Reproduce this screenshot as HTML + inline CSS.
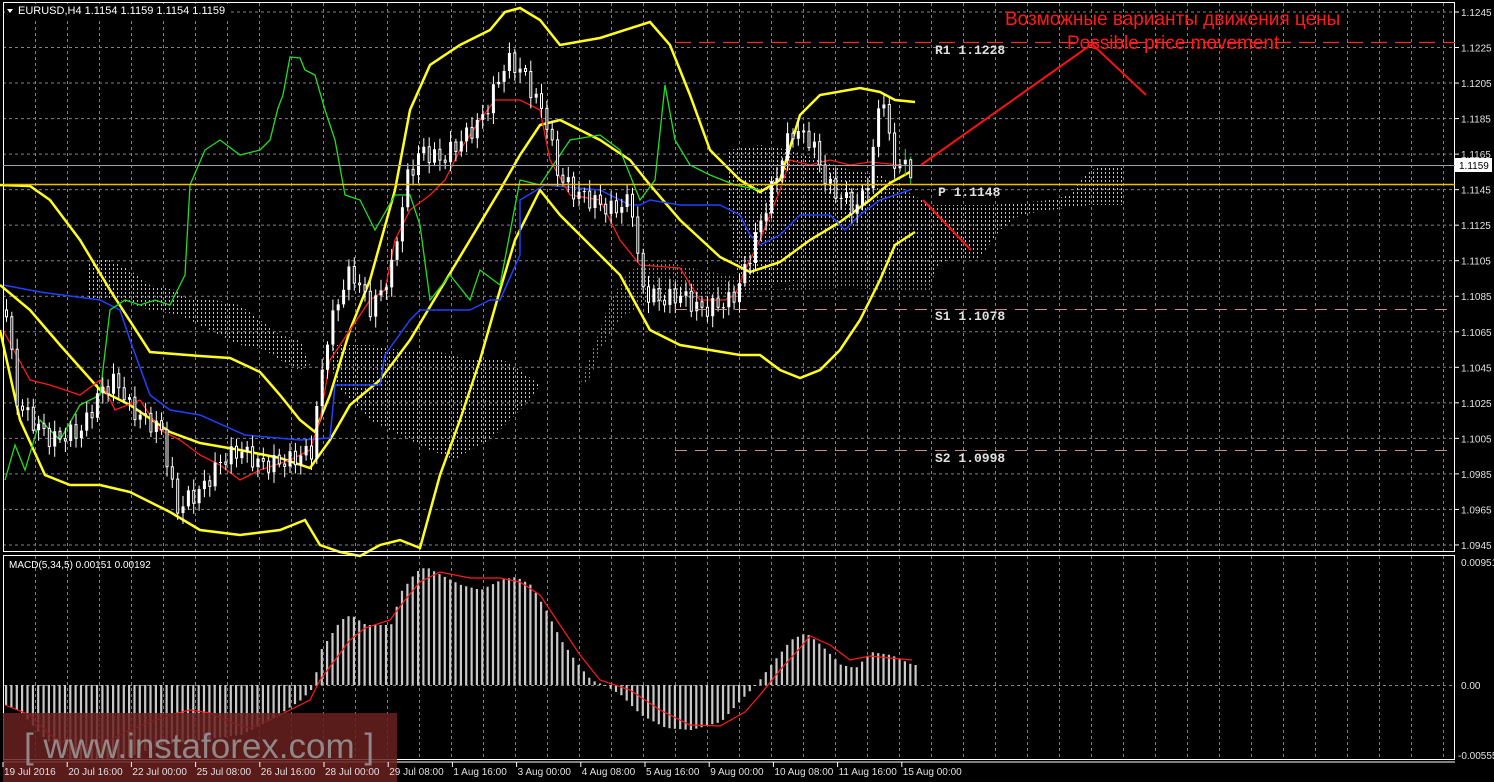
<!DOCTYPE html>
<html><head><meta charset="utf-8"><style>
html,body{margin:0;padding:0;background:#000;width:1494px;height:782px;overflow:hidden}
svg{display:block}
</style></head><body>
<svg id="s" width="1494" height="782" xmlns="http://www.w3.org/2000/svg" font-family="Liberation Sans, sans-serif">
<defs>
<pattern id="hw" width="4" height="4" patternUnits="userSpaceOnUse"><rect x="1" y="0" width="1" height="2" fill="#d8d8d8"/></pattern>
<pattern id="ho" width="4" height="4" patternUnits="userSpaceOnUse"><rect x="1" y="0" width="1" height="2" fill="#c8855a"/></pattern>
</defs>
<rect width="1494" height="782" fill="#000"/>
<g id="grid"></g>
<g opacity="0.9">
<polygon fill="url(#hw)" points="88,262 105,258 130,270 150,285 175,290 190,300 215,300 240,305 260,320 280,335 300,340 310,365 300,370 280,360 265,350 240,345 210,330 180,315 150,310 120,300 100,300 88,300"/>
<polygon fill="url(#hw)" points="330,345 370,345 400,350 440,352 470,360 500,358 520,370 540,385 530,400 510,420 490,440 470,450 455,460 430,450 410,440 390,430 370,420 350,400 335,385"/>
<polygon fill="url(#ho)" points="580,385 600,330 610,300 630,270 660,260 700,270 730,275 750,285 780,290 800,280 830,270 860,262 880,255 900,258 915,262 928,270 930,290 910,290 880,290 850,288 800,290 760,292 720,295 680,300 640,305 620,320 600,350 590,380"/>
<polygon fill="url(#hw)" points="728,150 760,145 790,150 820,160 850,170 880,175 905,190 930,205 960,205 990,205 1020,203 1050,200 1070,195 1085,175 1100,165 1122,165 1122,205 1090,205 1050,210 1020,215 1000,230 980,258 960,258 940,262 930,285 900,278 880,270 850,272 820,275 800,280 770,285 750,285 735,270 730,230 728,180"/>
</g>
<g id="lines"></g>
<g id="candles"></g>
<g id="macd"></g>
<rect x="3.5" y="2.5" width="1451" height="549" fill="none" stroke="#fff"/>
<rect x="3.5" y="555.5" width="1451" height="204" fill="none" stroke="#fff"/>
<line x1="3" y1="762" x2="1455" y2="762" stroke="#fff"/>
<line x1="675" y1="42.5" x2="1455" y2="42.5" stroke="#e8302a" stroke-width="1.3" stroke-dasharray="16,8"/>
<line x1="675" y1="309.5" x2="1455" y2="309.5" stroke="#c89080" stroke-dasharray="12,8"/>
<line x1="675" y1="450.5" x2="1455" y2="450.5" stroke="#c89080" stroke-dasharray="12,8"/>
<line x1="3" y1="165.5" x2="1455" y2="165.5" stroke="#9aa3ad"/>
<line x1="3" y1="184.5" x2="1455" y2="184.5" stroke="#f0c000" stroke-width="1.5"/>
<g font-family="Liberation Mono, monospace" font-weight="bold" font-size="13" fill="#e0e0e0">
<text x="935" y="54">R1 1.1228</text>
<text x="938" y="196">P 1.1148</text>
<text x="935" y="320">S1 1.1078</text>
<text x="935" y="462">S2 1.0998</text>
</g>
<text x="1005" y="25" font-size="19" fill="#ff1a1a">Возможные варианты движения цены</text>
<text x="1067" y="49" font-size="19" fill="#ff1a1a">Possible price movement</text>
<g stroke="#ff1010" stroke-width="2" fill="none">
<polyline points="921,165 1092,44 1146,95"/>
<line x1="923" y1="200" x2="971" y2="250"/>
</g>
<g id="title">
<rect x="5" y="4" width="225" height="14" fill="#000"/>
<g font-size="11" fill="#fff">
<polygon points="7,9 13,9 10,13" fill="#fff"/>
<text x="18" y="14">EURUSD,H4  1.1154 1.1159 1.1154 1.1159</text>
<text x="9" y="568" font-size="10">MACD(5,34,5) 0.00151 0.00192</text>
</g>
</g>
<g id="axis" font-size="10" fill="#e0e0e0"></g>
<rect x="1455" y="158" width="37" height="14" fill="#fff"/>
<text x="1459" y="169" font-size="10" fill="#000">1.1159</text>
<rect x="3" y="713" width="394" height="69" fill="#6a2020" opacity="0.85"/>
<text x="24" y="758" font-size="35" fill="#9a9a9a" opacity="0.85">[ www.instaforex.com ]</text>
<g id="time" font-size="10" fill="#e0e0e0"></g>
</svg>
<script>
(function(){
var NS="http://www.w3.org/2000/svg";
function el(p,t,a,txt){var e=document.createElementNS(NS,t);for(var k in a)e.setAttribute(k,a[k]);if(txt!=null)e.textContent=txt;document.getElementById(p).appendChild(e);return e;}
for(var x=35;x<1455;x+=32){el("grid","line",{x1:x+.5,y1:3,x2:x+.5,y2:551,stroke:"#7a8290","stroke-dasharray":"3,3"});el("grid","line",{x1:x+.5,y1:556,x2:x+.5,y2:760,stroke:"#7a8290","stroke-dasharray":"3,3"});}
for(var i=0;i<=15;i++){var y=12+i*35.53;el("grid","line",{x1:3,y1:y,x2:1455,y2:y,stroke:"#7a8290","stroke-dasharray":"3,3"});
 var p=(1.1245-i*0.002).toFixed(4);el("axis","line",{x1:1455,y1:y,x2:1459,y2:y,stroke:"#fff"});el("axis","text",{x:1461,y:y+4},p);}
el("grid","line",{x1:3,y1:685.5,x2:1455,y2:685.5,stroke:"#7a8290","stroke-dasharray":"3,3"});
el("axis","text",{x:1461,y:566},"0.00951");el("axis","text",{x:1461,y:689},"0.00");el("axis","text",{x:1458,y:759},"-0.00555");
var tl=["19 Jul 2016","20 Jul 16:00","22 Jul 00:00","25 Jul 08:00","26 Jul 16:00","28 Jul 00:00","29 Jul 08:00","1 Aug 16:00","3 Aug 00:00","4 Aug 08:00","5 Aug 16:00","9 Aug 00:00","10 Aug 08:00","11 Aug 16:00","15 Aug 00:00"];
for(var i=0;i<tl.length;i++){var x=3+i*64.2;el("time","line",{x1:x,y1:762,x2:x,y2:767,stroke:"#fff"});el("time","text",{x:x+1,y:775},tl[i]);}
function pl(pts,col,w){el("lines","polyline",{points:pts,fill:"none",stroke:col,"stroke-width":w});}
pl("0,185 30,186 50,200 80,240 110,290 150,352 200,356 230,358 260,372 280,395 300,420 315,432 330,395 350,330 370,280 395,190 410,110 430,65 460,45 490,30 505,12 520,8 540,20 560,45 600,38 650,22 670,45 690,95 710,150 740,180 760,192 780,180 800,115 820,95 860,88 880,92 895,100 915,102","#ffff1a",2.5);
pl("0,285 30,310 60,345 100,390 130,405 170,432 200,443 240,450 280,458 310,468 330,440 350,405 380,380 410,340 440,290 470,240 500,190 520,155 540,125 560,120 600,140 630,160 650,185 680,220 720,257 750,272 780,262 810,240 840,222 870,200 890,183 910,172","#ffff1a",2.5);
pl("0,330 20,420 45,475 70,485 100,485 130,492 170,512 200,530 240,535 280,530 305,520 320,545 340,552 360,556 380,545 400,540 420,548 440,475 460,420 480,360 500,290 515,240 540,190 560,215 590,245 620,275 650,330 680,345 710,350 740,355 760,355 780,370 800,378 820,370 840,350 860,320 880,280 895,245 915,232","#ffff1a",2.5);
pl("3,285 40,292 100,300 120,310 130,340 150,395 170,410 200,415 245,435 300,440 330,438 335,385 380,385 385,355 410,320 420,310 470,310 490,300 500,300 520,255 520,200 545,185 600,190 630,205 640,205 650,200 680,205 700,205 720,205 740,215 750,235 760,245 780,235 800,215 830,215 845,230 860,215 880,200 910,190","#2040ff",1.5);
pl("3,330 30,380 50,385 80,395 100,380 115,410 140,400 160,430 180,440 200,455 220,465 240,480 260,470 290,460 310,450 320,420 330,360 350,330 370,300 385,290 395,240 410,210 430,195 445,180 460,150 480,120 495,100 520,100 540,110 550,160 570,195 600,200 620,240 640,265 680,268 700,300 725,300 735,295 745,270 760,240 780,190 790,160 810,165 830,160 850,165 870,162 900,165","#ff1a1a",1.3);
pl("5,480 15,445 25,470 40,420 60,440 80,405 100,395 110,310 125,300 140,305 155,300 170,305 185,275 190,185 205,150 220,140 240,155 260,150 270,140 278,108 283,95 290,57 300,58 305,70 315,75 325,110 335,140 345,195 360,200 375,230 395,195 410,195 420,225 430,300 450,275 470,300 480,270 500,285 520,180 540,185 570,140 600,135 620,150 640,200 655,180 665,85 675,140 690,165 710,175 735,185 760,190","#22dd22",1.3);
var cp=[[5,310],[15,400],[30,420],[50,440],[80,430],[100,390],[115,380],[130,410],[160,430],[175,510],[185,500],[200,490],[220,460],[240,450],[260,465],[290,460],[310,450],[325,340],[340,290],[350,270],[370,310],[390,270],[405,180],[420,150],[440,160],[460,140],[480,120],[495,85],[505,60],[520,70],[535,100],[545,120],[555,170],[570,190],[590,200],[610,210],[630,200],[640,290],[660,300],[680,295],[700,310],[730,300],[740,280],[760,220],[780,160],[790,130],[810,140],[820,170],[830,190],[845,200],[855,210],[870,170],[880,80],[890,160],[900,165],[912,170]];
function iy(x){for(var i=1;i<cp.length;i++){if(x<=cp[i][0]){var a=cp[i-1],b=cp[i];return a[1]+(b[1]-a[1])*(x-a[0])/(b[0]-a[0]);}}return 170;}
var wick="",bodyW="",bodyB="",gW="";
var prv=iy(5),k=0;
for(var xx=5;xx<=912;xx+=5.35){k++;
 var c=iy(xx)+Math.sin(k*2.3)*9;var o=prv;
 var tp=Math.min(o,c),bt=Math.max(o,c);if(bt-tp<1)bt=tp+1;
 var hi=tp-3-Math.abs(Math.sin(k*1.7))*8,lo=bt+3+Math.abs(Math.cos(k*1.3))*8;
 var xw=(xx+1.5).toFixed(1);
 var seg="M"+xw+" "+hi.toFixed(1)+"V"+lo.toFixed(1);
 if(xx>900)gW+=seg;else wick+=seg;
 if(c<o)bodyW+="M"+xx.toFixed(1)+" "+tp.toFixed(1)+"h3V"+bt.toFixed(1)+"h-3Z";
 else bodyB+="M"+(xx+.5).toFixed(1)+" "+tp.toFixed(1)+"h2V"+bt.toFixed(1)+"h-2Z";
 prv=c;}
el("candles","path",{d:wick,stroke:"#fff","stroke-width":1,fill:"none"});
el("candles","path",{d:gW,stroke:"#22dd22","stroke-width":1,fill:"none"});
el("candles","path",{d:bodyB,stroke:"#fff","stroke-width":1,fill:"#000"});
el("candles","path",{d:bodyW,fill:"#fff",stroke:"none"});
var hp=[[5,705],[20,712],[40,735],[70,760],[120,760],[160,745],[200,740],[240,735],[270,720],[300,700],[312,688],[320,650],[340,620],[350,615],[365,625],[390,625],[400,592],[415,572],[425,567],[440,575],[460,585],[480,590],[500,580],[515,577],[530,585],[545,610],[560,640],[575,662],[590,680],[605,686],[620,695],[640,715],[665,728],[690,730],[720,722],[740,700],[755,685],[770,665],[790,640],[805,633],[820,645],[840,665],[855,668],[870,652],[890,655],[912,665]];
function hy(x){for(var i=1;i<hp.length;i++){if(x<=hp[i][0]){var a=hp[i-1],b=hp[i];return a[1]+(b[1]-a[1])*(x-a[0])/(b[0]-a[0]);}}return 665;}
var md="";
for(var xx=5;xx<=915;xx+=5.35){var y=hy(xx);md+="M"+xx.toFixed(1)+" "+Math.min(y,685).toFixed(1)+"h2.2V"+Math.max(y,685).toFixed(1)+"h-2.2Z";}
el("macd","path",{d:md,fill:"#c8c8c8"});
el("macd","polyline",{points:"5,705 30,715 50,735 70,745 90,747 110,740 130,730 150,722 170,715 190,710 210,713 230,722 250,728 270,720 290,710 310,700 320,680 335,660 350,640 365,628 390,620 405,600 420,582 440,572 470,578 500,578 520,582 540,595 560,625 580,655 600,680 630,690 660,710 690,725 720,726 745,712 760,695 780,670 800,648 810,636 830,645 850,660 870,656 890,658 912,660",fill:"none",stroke:"#ff1a1a","stroke-width":1.2});
})();
</script>
</body></html>
